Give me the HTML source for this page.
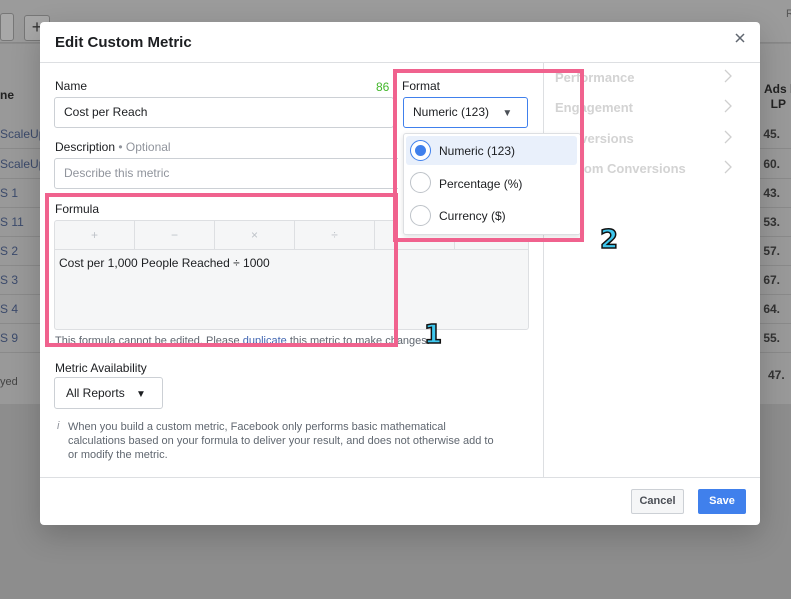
<!DOCTYPE html>
<html><head><style>
*{box-sizing:border-box;margin:0;padding:0}
body{width:791px;height:599px;overflow:hidden;background:#8d8d8d;font-family:"Liberation Sans",sans-serif;position:relative;font-size:12px;color:#1c1e21}
.a{position:absolute}
.bg-top{left:0;top:0;width:791px;height:43px;background:#9b9b9b;border-bottom:1px solid #888}
.tbl{background:#999}
.row{position:absolute;left:0;width:40px;height:29px;border-bottom:1px solid #8a8a8a;color:#3b4a6b;font-size:12px;line-height:29px;overflow:hidden;white-space:nowrap}
.rrow{position:absolute;left:760px;width:31px;height:29px;border-bottom:1px solid #8a8a8a;color:#333;font-size:12px;line-height:29px;font-weight:bold;white-space:nowrap;overflow:hidden}
.modal{left:40px;top:22px;width:720px;height:503px;background:#fff;border-radius:4px;box-shadow:0 10px 30px rgba(0,0,0,.2)}
.lbl{font-size:12px;color:#1c1e21}
.inp{border:1px solid #ccd0d5;border-radius:3px;background:#fff;font-size:12px;padding-left:9px;line-height:28px}
.pink{border:4px solid #f0628e}
.rl{font-size:13px;font-weight:bold;color:#d3d3d3}
.radio{width:21px;height:21px;border:1px solid #bec3c9;border-radius:50%;background:#fff}
.num{font-size:26px;font-weight:900;color:#3fc8ef;-webkit-text-stroke:1.5px #111;font-family:"DejaVu Sans",sans-serif}
</style></head><body>
<div class="a bg-top"></div>
<div class="a" style="left:0;top:13px;width:14px;height:28px;background:#a8a8a8;border:1px solid #777;border-radius:3px"></div>
<div class="a" style="left:24px;top:15px;width:26px;height:26px;background:#a8a8a8;border:1px solid #777;border-radius:3px;font-size:18px;line-height:22px;text-align:center;color:#333">+</div>
<div class="a" style="left:786px;top:8px;font-size:11px;color:#555">R</div>
<div class="a tbl" style="left:0;top:44px;width:40px;height:360px"></div>
<div class="a tbl" style="left:760px;top:44px;width:31px;height:360px"></div>
<div class="a" style="left:0;top:88px;font-weight:bold;font-size:12px;color:#222">ne</div>
<div class="row" style="top:120px">ScaleUp</div>
<div class="row" style="top:150px">ScaleUp</div>
<div class="row" style="top:179px">S 1</div>
<div class="row" style="top:208px">S 11</div>
<div class="row" style="top:237px">S 2</div>
<div class="row" style="top:266px">S 3</div>
<div class="row" style="top:295px">S 4</div>
<div class="row" style="top:324px">S 9</div>
<div class="a" style="left:0;top:376px;font-size:11px;color:#444">yed</div>
<div class="a" style="left:764px;top:82px;font-weight:bold;font-size:12px;color:#222;line-height:15px;white-space:nowrap">Ads ke<br>&nbsp;&nbsp;LP</div>
<div class="rrow" style="top:120px">&nbsp;45.</div>
<div class="rrow" style="top:150px">&nbsp;60.</div>
<div class="rrow" style="top:179px">&nbsp;43.</div>
<div class="rrow" style="top:208px">&nbsp;53.</div>
<div class="rrow" style="top:237px">&nbsp;57.</div>
<div class="rrow" style="top:266px">&nbsp;67.</div>
<div class="rrow" style="top:295px">&nbsp;64.</div>
<div class="rrow" style="top:324px">&nbsp;55.</div>
<div class="a" style="left:768px;top:368px;font-weight:bold;font-size:12px;color:#333">47.</div>

<div class="a modal">
  <div class="a" style="left:15px;top:12px;font-size:15px;font-weight:bold">Edit Custom Metric</div>
  <svg class="a" style="left:695px;top:11px" width="10" height="10"><path d="M1 1L9 9M9 1L1 9" stroke="#606770" stroke-width="1.5"/></svg>
  <div class="a" style="left:0;top:40px;width:720px;height:1px;background:#dddfe2"></div>
  <div class="a" style="left:503px;top:41px;width:1px;height:414px;background:#dddfe2"></div>
  <div class="a" style="left:0;top:455px;width:720px;height:1px;background:#dddfe2"></div>

  <div class="a lbl" style="left:15px;top:57px">Name</div>
  <div class="a" style="left:336px;top:58px;color:#42b72a;font-size:12px">86</div>
  <div class="a inp" style="left:14px;top:75px;width:340px;height:31px">Cost per Reach</div>
  <div class="a lbl" style="left:15px;top:118px">Description <span style="color:#90949c">• Optional</span></div>
  <div class="a inp" style="left:14px;top:136px;width:475px;height:31px;color:#90949c">Describe this metric</div>
  <div class="a lbl" style="left:15px;top:180px">Formula</div>
  <div class="a" style="left:14px;top:198px;width:475px;height:110px;background:#f5f6f7;border:1px solid #dddfe2;border-radius:3px"></div>
  <div class="a" style="left:15px;top:199px;width:473px;height:29px;border-bottom:1px solid #dddfe2;display:flex;color:#bec3c9;font-size:12px">
    <div style="width:80px;text-align:center;line-height:29px;border-right:1px solid #dddfe2">+</div>
    <div style="width:80px;text-align:center;line-height:29px;border-right:1px solid #dddfe2">−</div>
    <div style="width:80px;text-align:center;line-height:29px;border-right:1px solid #dddfe2">×</div>
    <div style="width:80px;text-align:center;line-height:29px;border-right:1px solid #dddfe2">÷</div>
    <div style="width:80px;border-right:1px solid #dddfe2"></div>
  </div>
  <div class="a" style="left:19px;top:234px;font-size:12px">Cost per 1,000 People Reached ÷ 1000</div>
  <div class="a" style="left:15px;top:313px;font-size:11px;color:#606770">This formula cannot be edited. Please <span style="color:#4267b2">duplicate</span> this metric to make changes.</div>
  <div class="a lbl" style="left:15px;top:339px">Metric Availability</div>
  <div class="a inp" style="left:14px;top:355px;width:109px;height:32px;line-height:31px;padding-left:11px">All Reports <span style="margin-left:8px;font-size:10px">▼</span></div>
  <div class="a" style="left:17px;top:398px;font-size:11px;color:#90949c;font-style:italic">i</div>
  <div class="a" style="left:28px;top:398px;width:430px;font-size:11px;line-height:14px;color:#606770">When you build a custom metric, Facebook only performs basic mathematical calculations based on your formula to deliver your result, and does not otherwise add to or modify the metric.</div>

  <div class="a rl" style="left:515px;top:48px">Performance</div>
  <div class="a rl" style="left:515px;top:78px">Engagement</div>
  <div class="a rl" style="left:515px;top:109px">Conversions</div>
  <div class="a rl" style="left:515px;top:139px">Custom Conversions</div>
  <svg class="a" style="left:684px;top:47px" width="8" height="14"><path d="M1 1L7 7L1 13" fill="none" stroke="#cfcfcf" stroke-width="1.3"/></svg>
  <svg class="a" style="left:684px;top:77px" width="8" height="14"><path d="M1 1L7 7L1 13" fill="none" stroke="#cfcfcf" stroke-width="1.3"/></svg>
  <svg class="a" style="left:684px;top:108px" width="8" height="14"><path d="M1 1L7 7L1 13" fill="none" stroke="#cfcfcf" stroke-width="1.3"/></svg>
  <svg class="a" style="left:684px;top:138px" width="8" height="14"><path d="M1 1L7 7L1 13" fill="none" stroke="#cfcfcf" stroke-width="1.3"/></svg>

  <div class="a" style="left:591px;top:467px;width:53px;height:25px;background:#f5f6f7;border:1px solid #ccd0d5;border-radius:2px;font-size:11px;font-weight:bold;color:#4b4f56;text-align:center;line-height:23px">Cancel</div>
  <div class="a" style="left:658px;top:467px;width:48px;height:25px;background:#4080ec;border-radius:2px;font-size:11px;font-weight:bold;color:#fff;text-align:center;line-height:25px">Save</div>
</div>

<div class="a" style="left:398px;top:73px;width:145px;height:165px;background:#fff"></div>
<div class="a lbl" style="left:402px;top:79px">Format</div>
<div class="a inp" style="left:403px;top:97px;width:125px;height:31px;border-color:#4080ec;line-height:29px">Numeric (123) <span style="margin-left:10px;font-size:10px;color:#4b4f56">▼</span></div>
<div class="a" style="left:403px;top:133px;width:178px;height:102px;background:#fff;border:1px solid #dddfe2;border-radius:3px;box-shadow:0 2px 6px rgba(0,0,0,.12)"></div>
<div class="a" style="left:406px;top:136px;width:171px;height:29px;background:#e9f0fb;border-radius:3px"></div>
<div class="a radio" style="left:410px;top:140px;border-color:#4080ec"></div>
<div class="a" style="left:415px;top:145px;width:11px;height:11px;border-radius:50%;background:#4080ec"></div>
<div class="a" style="left:439px;top:144px;font-size:12px">Numeric (123)</div>
<div class="a radio" style="left:410px;top:172px"></div>
<div class="a" style="left:439px;top:177px;font-size:12px">Percentage (%)</div>
<div class="a radio" style="left:410px;top:205px"></div>
<div class="a" style="left:439px;top:209px;font-size:12px">Currency ($)</div>

<div class="a pink" style="left:45px;top:193px;width:353px;height:154px"></div>
<div class="a pink" style="left:393px;top:69px;width:191px;height:173px"></div>
<div class="a num" style="left:424px;top:320px">1</div>
<div class="a num" style="left:600px;top:225px">2</div>
</body></html>
